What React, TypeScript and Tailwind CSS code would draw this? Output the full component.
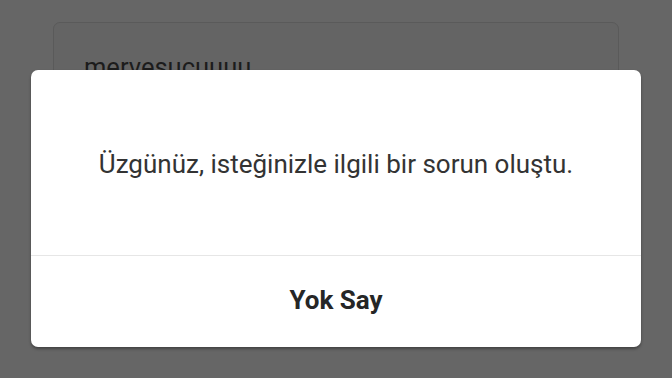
export default function App() {
  return (
    <div className="w-[672px] h-[378px] bg-[#666666] overflow-hidden relative" style={{ fontFamily: "Roboto, 'Noto Sans', sans-serif" }}>
      <div className="mx-[53px] mt-[22px] h-[300px] rounded-[7px] border border-[#5a5a5a] bg-[#646464] px-[30px] pt-[32px]">
        <div className="text-[25.5px] text-[#1c1c1c] leading-none">mervesucuuuu</div>
      </div>
      <div className="absolute left-[31px] top-[70px] w-[610px] h-[277px] bg-white rounded-[7px] shadow-[0_2px_3px_rgba(0,0,0,0.35)] flex flex-col">
        <div className="h-[186px] flex items-center justify-center border-b border-[#e6e6e6]">
          <span className="text-[26px] text-[#333333] pt-[4px]">Üzgünüz, isteğinizle ilgili bir sorun oluştu.</span>
        </div>
        <div className="flex-1 flex items-center justify-center">
          <span className="text-[26px] font-bold text-[#262626] pb-[2px]">Yok Say</span>
        </div>
      </div>
    </div>
  );
}
